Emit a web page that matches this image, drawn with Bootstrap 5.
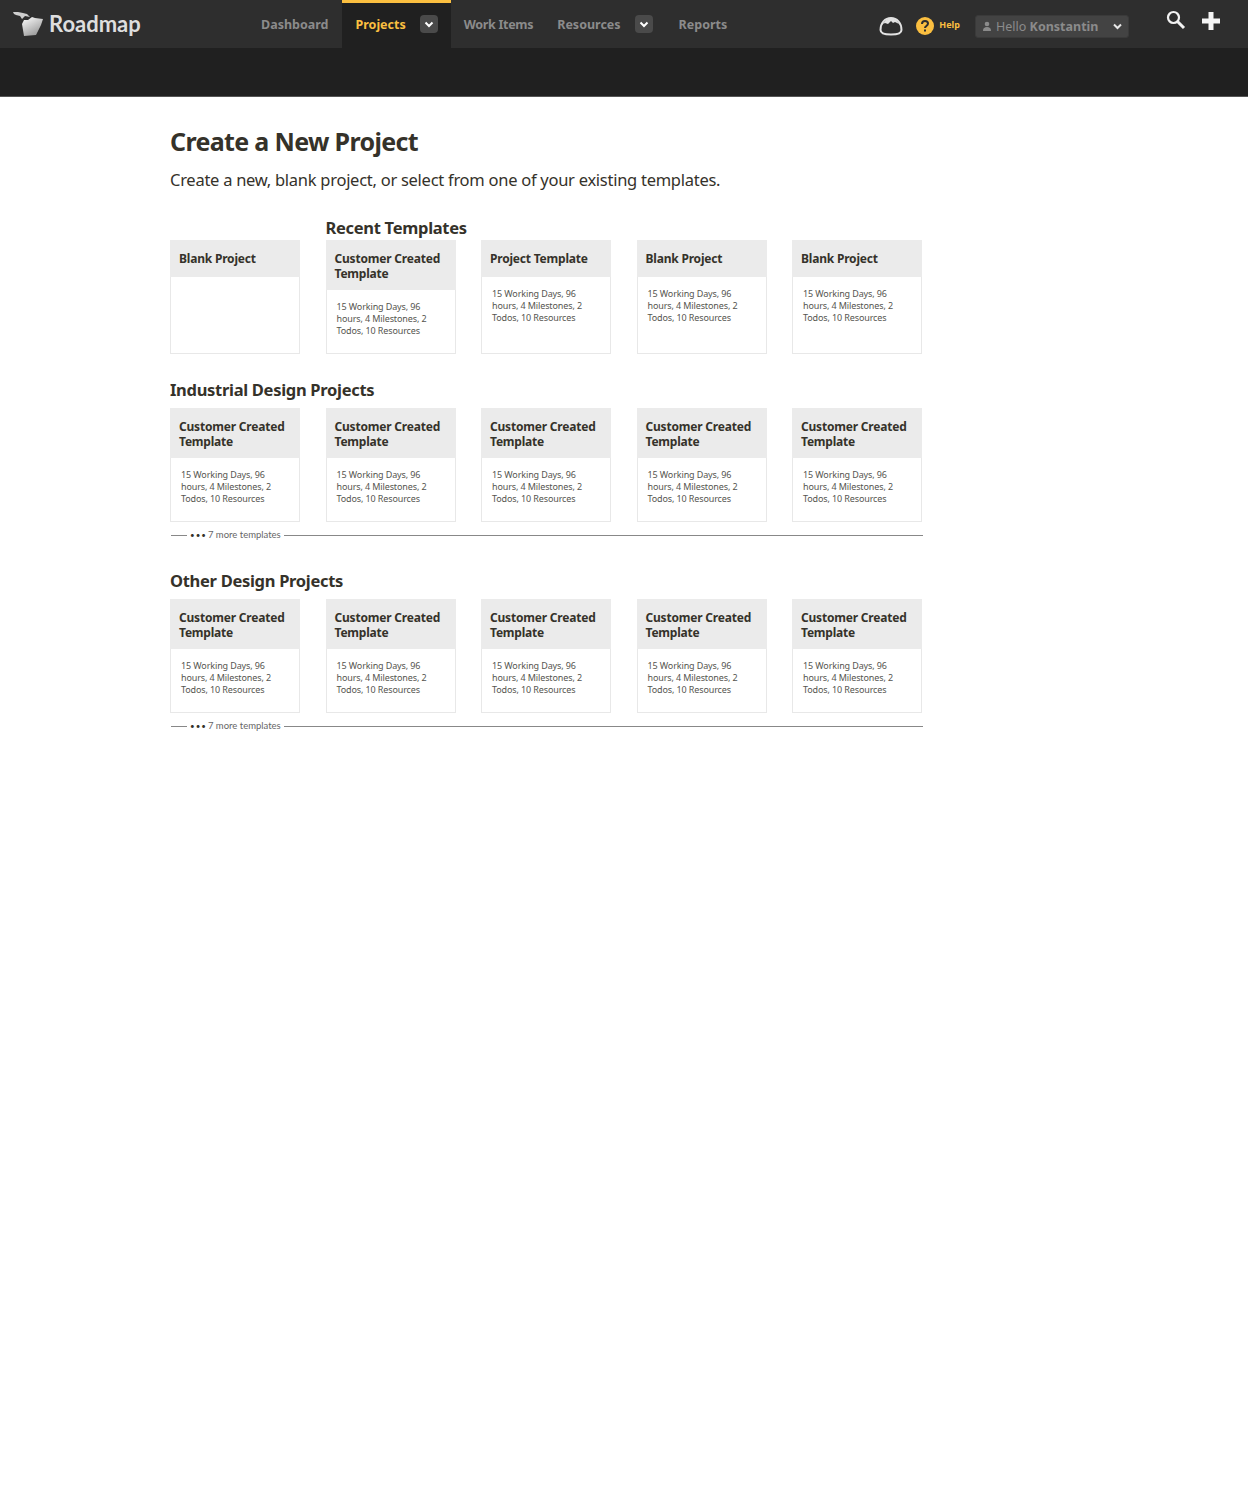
<!DOCTYPE html>
<html lang="en">
<head>
  <meta charset="UTF-8" />
  <meta name="viewport" content="width=device-width, initial-scale=1.0"/>
  <title>Roadmap - Create a New Project</title>
  <link rel="stylesheet" href="https://cdn.jsdelivr.net/npm/bootstrap@5.3.0/dist/css/bootstrap.min.css" />
  <style>
    body { font-family: "Noto Sans", "Open Sans", sans-serif; color: #35322a; background: #fff; }
    .topbar { height: 48px; background: #2e2e2e; padding-right: 28px; }
    .subbar { height: 49px; background: #202020; border-bottom: 1px solid #555; }
    .brand { width: 248px; padding-left: 12px; gap: 5px; color: #dedede; font: 700 22px Lato, sans-serif; }
    .brand span { margin-top: -2px; }
    .topbar .nav-link { padding: 0; font-size: 12.5px; font-weight: 700; color: #8b8b8b; height: 48px; line-height: 50px; }
    .topbar .nav-link.tight { letter-spacing: -.3px; }
    .tab-item { padding: 0 13px; height: 48px; }
    .tab-item.current { background: #202020; box-shadow: inset 0 3px 0 #fbbf40; }
    .tab-item.current .nav-link { color: #fbbf40; }
    .tab-first { padding-right: 14px; }
    .tab-res { padding-left: 11px; }
    .chev { width: 18px; height: 18px; border-radius: 4px; background: #4a4a4a; margin-left: 14px; }
    .cloud-ico { width: 24px; height: 19px; margin: 4px 13px 0 0; }
    .help-ico { margin-top: 3px; }
    .help-text { color: #fbbf40; font-size: 9px; font-weight: 700; margin: 2px 15px 0 5px; }
    .user-menu { width: 154px; height: 23px; margin: 4px 37px 0 0; background: #434343; border-radius: 3px; border: 1px solid #3a3a3a; color: #8b8b8b; font-size: 12.5px; padding: 0 5px 0 6px; }
    .user-menu span { padding-top: 2px; }
    .user-menu b { font-weight: 700; }
    .search-ico { margin: -8px 16px 0 0; }
    .plus-ico { margin-top: -6px; }
    .page { width: 752px; margin-left: 170px; }
    .page h1 { font: 700 25px/32px "Noto Sans", sans-serif; letter-spacing: -.65px; margin: 28px 0 0; color: #35322a; }
    .intro { font-size: 16.5px; line-height: 24px; letter-spacing: -.27px; margin: 11px 0 0; color: #35322a; }
    .tpl-grid { display: grid; grid-template-columns: repeat(5, 130px); column-gap: 25.5px; }
    .tpl-grid.first-row { margin-top: 26px; }
    .tpl-head { font-size: 16.5px; line-height: 20px; font-weight: 700; letter-spacing: -.3px; margin: 0; color: #35322a; }
    .tpl-head.over-cards { grid-column: 2 / -1; margin-bottom: 2px; }
    .tpl-head.sec-a { margin: 26px 0 8px; }
    .tpl-head.sec-b { margin: 30px 0 8px; }
    .tpl-card { height: 114px; border: 1px solid #e8e8e8; border-radius: 0; }
    .tpl-card .card-header { min-height: 37px; background: #ebebeb; border: 0; border-radius: 0; margin: -1px -1px 0; padding: 11px 9px 9px; font-size: 12px; line-height: 15px; font-weight: 700; letter-spacing: -.2px; color: #35322a; }
    .tpl-card .card-body { padding: 11px 10px 0; font-size: 9px; line-height: 12px; letter-spacing: -.12px; color: #55554f; }
    .more-line { display: flex; align-items: center; font: 400 9.5px/12px Lato, sans-serif; color: #666; margin: 7px -1px 0 0; }
    .more-line::before { content: ""; width: 16px; border-top: 1px solid #888; margin: 0 3px 0 1px; }
    .more-line::after { content: ""; flex: 1; border-top: 1px solid #888; margin-left: 3px; }
    .more-line i { font-style: normal; color: #35322a; font-size: 8px; letter-spacing: 1px; margin-right: 1px; }
  </style>
</head>
<body>
  <div class="topbar d-flex align-items-center">
    <a class="brand d-flex align-items-center text-decoration-none" href="#">
      <svg width="32" height="26" viewBox="0 0 32 26">
        <defs><linearGradient id="fold" x1="0" y1="0" x2="0.6" y2="1"><stop offset="0" stop-color="#fff"/><stop offset="1" stop-color="#9a9a9a"/></linearGradient></defs>
        <path d="M1 1l5 0 5 1 4 1 3 3-5-1-3 3-2-3-4-1-2-1z" fill="#cfcfcf"/>
        <path d="M10 13l2-4 4 0 4-3 3 1 8 1-2 6-5 10-12 1-1-6z" fill="url(#fold)"/>
      </svg>
      <span>Roadmap</span>
    </a>
    <ul class="nav flex-nowrap align-items-center">
      <li class="tab-item tab-first"><a class="nav-link" href="#">Dashboard</a></li>
      <li class="tab-item current d-flex align-items-center"><a class="nav-link" href="#">Projects</a>
        <span class="chev d-flex align-items-center justify-content-center"><svg width="10" height="7" viewBox="0 0 10 7"><path d="M1.5 1.5L5 5l3.5-3.5" fill="none" stroke="#fff" stroke-width="2"/></svg></span></li>
      <li class="tab-item"><a class="nav-link tight" href="#">Work Items</a></li>
      <li class="tab-item tab-res d-flex align-items-center"><a class="nav-link" href="#">Resources</a>
        <span class="chev d-flex align-items-center justify-content-center"><svg width="10" height="7" viewBox="0 0 10 7"><path d="M1.5 1.5L5 5l3.5-3.5" fill="none" stroke="#fff" stroke-width="2"/></svg></span></li>
      <li class="tab-item"><a class="nav-link" href="#">Reports</a></li>
    </ul>
    <div class="ms-auto d-flex align-items-center">
      <svg class="cloud-ico" viewBox="0 0 24 19"><path d="M1.500 13C1.500 6 6 1 12 1s10.500 5 10.500 12c0 3-5 4.500-10.500 4.500S1.500 16 1.500 13z" fill="none" stroke="#e2e2e2" stroke-width="2"/><path d="M4 7c2-4 5-6 8-6s6 2 8 6l-4-2-2 1-2-2-3 3-3-1z" fill="#e2e2e2"/></svg>
      <svg class="help-ico" width="18" height="18" viewBox="0 0 18 18"><circle cx="9" cy="9" r="9" fill="#fbbf40"/><path d="M6 7c0-2 1.300-3 3-3s3 1 3 2.600c0 2.400-3 2.400-3 4.400" fill="none" stroke="#2e2e2e" stroke-width="2"/><rect x="8" y="12.500" width="2" height="2" fill="#2e2e2e"/></svg>
      <span class="help-text">Help</span>
      <div class="user-menu d-flex align-items-center">
        <svg width="10" height="10" viewBox="0 0 10 10"><circle cx="5" cy="3" r="2.300" fill="#8b8b8b"/><path d="M1 10c0-3 1.500-4 4-4s4 1 4 4z" fill="#8b8b8b"/></svg>
        <span class="ms-1">Hello <b>Konstantin</b></span>
        <svg class="ms-auto" width="11" height="7" viewBox="0 0 10 7"><path d="M1.500 1.500L5 5l3.500-3.500" fill="none" stroke="#e8e8e8" stroke-width="2"/></svg>
      </div>
      <svg class="search-ico" width="20" height="20" viewBox="0 0 20 20"><circle cx="7.500" cy="7.500" r="5.500" fill="none" stroke="#f2f2f2" stroke-width="2.200"/><path d="M11.500 11.500L18 18" stroke="#f2f2f2" stroke-width="3"/></svg>
      <svg class="plus-ico" width="18" height="18" viewBox="0 0 18 18"><path d="M9 0v18M0 9h18" stroke="#f4f4f4" stroke-width="5"/></svg>
    </div>
  </div>
  <div class="subbar"></div>

  <div class="page">
    <h1>Create a New Project</h1>
    <p class="intro">Create a new, blank project, or select from one of your existing templates.</p>

    <div class="tpl-grid first-row">
      <div></div>
      <h2 class="tpl-head over-cards">Recent Templates</h2>
      <div class="card tpl-card"><div class="card-header">Blank Project</div></div>
      <div class="card tpl-card"><div class="card-header">Customer Created Template</div><div class="card-body">15 Working Days, 96 hours, 4 Milestones, 2 Todos, 10 Resources</div></div>
      <div class="card tpl-card"><div class="card-header">Project Template</div><div class="card-body">15 Working Days, 96 hours, 4 Milestones, 2 Todos, 10 Resources</div></div>
      <div class="card tpl-card"><div class="card-header">Blank Project</div><div class="card-body">15 Working Days, 96 hours, 4 Milestones, 2 Todos, 10 Resources</div></div>
      <div class="card tpl-card"><div class="card-header">Blank Project</div><div class="card-body">15 Working Days, 96 hours, 4 Milestones, 2 Todos, 10 Resources</div></div>
    </div>

    <h2 class="tpl-head sec-a">Industrial Design Projects</h2>
    <div class="tpl-grid" id="industrial"></div>
    <div class="more-line"><i>&#8226;&#8226;&#8226;</i>7 more templates</div>

    <h2 class="tpl-head sec-b">Other Design Projects</h2>
    <div class="tpl-grid" id="other"></div>
    <div class="more-line"><i>&#8226;&#8226;&#8226;</i>7 more templates</div>
  </div>

  <script>
    // Both lower sections have five identical template cards
    ["industrial", "other"].forEach(function (id) {
      let html = "";
      for (let i = 0; i < 5; i++) {
        html += '<div class="card tpl-card"><div class="card-header">Customer Created Template</div>' +
                '<div class="card-body">15 Working Days, 96 hours, 4 Milestones, 2 Todos, 10 Resources</div></div>';
      }
      document.getElementById(id).innerHTML = html;
    });
  </script>
  <script src="https://cdn.jsdelivr.net/npm/bootstrap@5.3.0/dist/js/bootstrap.bundle.min.js"></script>
</body>
</html>
